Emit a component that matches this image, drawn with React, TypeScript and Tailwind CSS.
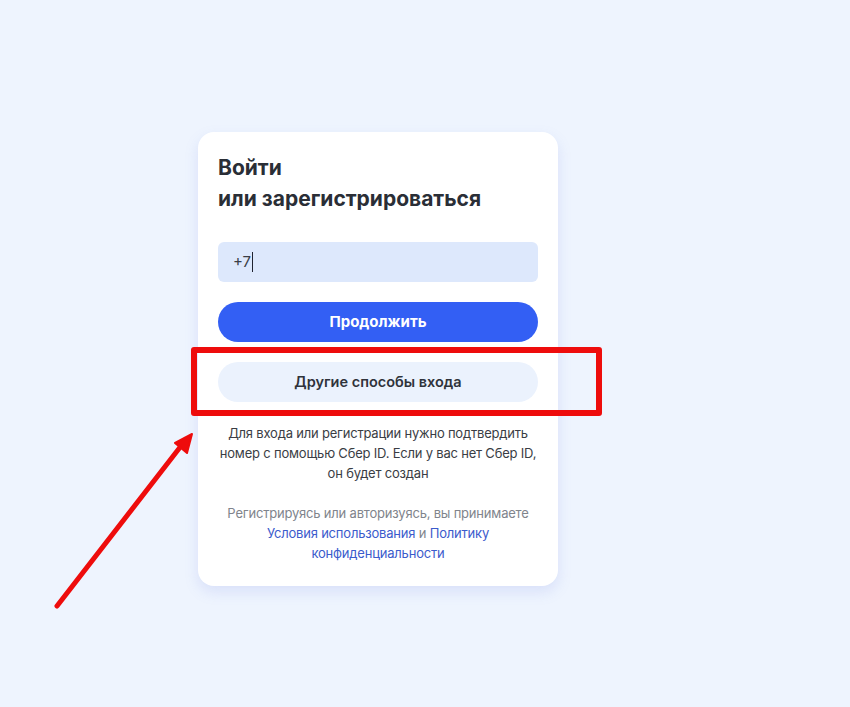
import React from "react";

const App = () => {
  return (
    <div
      className="relative min-h-[707px] w-full overflow-hidden bg-[#eef4fe] pt-[132px]"
      style={{ fontFamily: "Inter, 'Noto Sans', sans-serif" }}
    >
      {/* Login card */}
      <div className="ml-[198px] w-[360px] rounded-2xl bg-white px-5 pb-[23px] pt-5 shadow-[0_6px_14px_rgba(120,140,230,0.18)]">
        <h1 className="text-[21px] font-bold leading-[31px] text-[#2a2e36]">
          Войти
          <br />
          или зарегистрироваться
        </h1>

        <div className="mt-7 flex h-10 items-center rounded-md bg-[#dde8fc] px-[15px] text-[15px] text-[#3a3e46]">
          <span>+7</span>
          <span className="ml-px h-5 w-px bg-[#1f2330]"></span>
        </div>

        <button className="mt-5 flex h-10 w-full items-center justify-center rounded-full bg-[#335ff4] text-[15px] font-bold text-white">
          Продолжить
        </button>

        <button className="mt-5 flex h-10 w-full items-center justify-center rounded-full bg-[#ebf2fd] text-[14.5px] font-semibold text-[#2f333b]">
          Другие способы входа
        </button>

        <p className="mt-[21px] whitespace-nowrap text-center text-[13px] leading-5 tracking-[-0.2px] text-[#3a3d44]">
          Для входа или регистрации нужно подтвердить
          <br />
          номер с помощью Сбер ID. Если у вас нет Сбер ID,
          <br />
          он будет создан
        </p>

        <p className="mt-5 whitespace-nowrap text-center text-[13px] leading-5 tracking-[-0.2px] text-[#80848c]">
          Регистрируясь или авторизуясь, вы принимаете
          <br />
          <span className="text-[#3b5bcc]">Условия использования</span> и{" "}
          <span className="text-[#3b5bcc]">Политику</span>
          <br />
          <span className="text-[#3b5bcc]">конфиденциальности</span>
        </p>
      </div>

      {/* Red highlight around the second button */}
      <div className="absolute left-[191px] top-[347px] h-[69px] w-[411px] rounded-[3px] border-[6px] border-[#ee0c0c]"></div>

      {/* Red arrow */}
      <svg className="absolute left-0 top-0" width="850" height="707" viewBox="0 0 850 707">
        <line x1="57" y1="606" x2="181" y2="446" stroke="#ee0c0c" strokeWidth="5" strokeLinecap="round" />
        <polygon points="192,434 175,443 187,453" fill="#ee0c0c" stroke="#ee0c0c" strokeWidth="2" strokeLinejoin="round" />
      </svg>
    </div>
  );
};

export default App;
